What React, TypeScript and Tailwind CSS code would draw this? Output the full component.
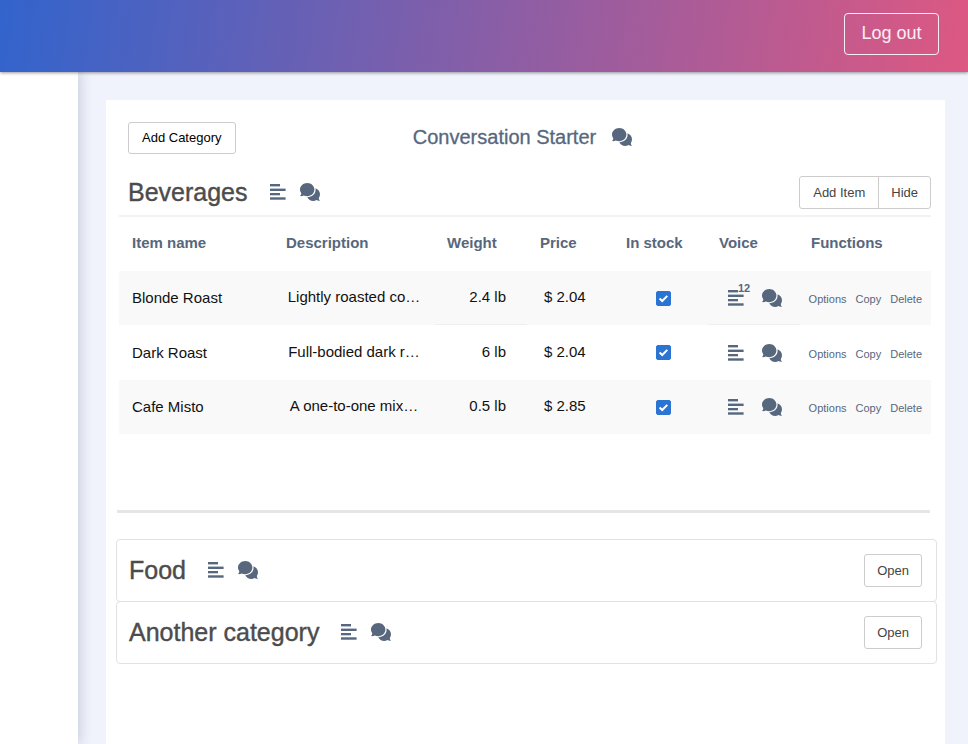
import React, { useState } from 'react';

interface Item {
  id: number;
  name: string;
  description: string;
  weight: string;
  price: string;
  inStock: boolean;
  voiceCount?: number;
}

const items: Item[] = [
  { id: 1, name: 'Blonde Roast', description: 'Lightly roasted co…', weight: '2.4 lb', price: '$ 2.04', inStock: true, voiceCount: 12 },
  { id: 2, name: 'Dark Roast', description: 'Full-bodied dark r…', weight: '6 lb', price: '$ 2.04', inStock: true },
  { id: 3, name: 'Cafe Misto', description: 'A one-to-one mix…', weight: '0.5 lb', price: '$ 2.85', inStock: true },
];

const closedCategories = ['Food', 'Another category'];

const LinesIcon: React.FC = () => (
  <svg viewBox="0 0 16 16" className="block w-4 h-4" fill="currentColor" aria-hidden="true">
    <rect x="0" y="0" width="10" height="2.4" />
    <rect x="0" y="4.6" width="15.6" height="2.4" />
    <rect x="0" y="9" width="10" height="2.3" />
    <rect x="0" y="13.3" width="15.6" height="2.4" />
  </svg>
);

const ChatIcon: React.FC = () => (
  <svg viewBox="0 0 20 18" className="block w-5 h-[18px]" fill="currentColor" aria-hidden="true">
    <path d="M7.3 0C11.3 0 14.4 2.9 14.4 6.6S11.3 13.2 7.3 13.2C6 13.2 4.8 12.9 3.8 12.4C2.7 13 1.5 13.3 0.1 13.1C0.9 12.3 1.3 11.4 1.3 10.3C0.5 9.2 0 8 0 6.6C0 2.9 3.3 0 7.3 0Z" />
    <path d="M15.4 5.2C18.1 6.2 20 8.5 20 11.2C20 12.7 19.6 13.9 18.8 14.9C18.8 16.1 19.2 17 20 17.7C18.6 17.9 17.4 17.6 16.4 17C15.5 17.6 14.4 17.9 13.2 17.9C10.6 17.9 8.4 16.6 7.3 14.2C12 14.2 15.6 11 15.6 6.8C15.6 6.2 15.5 5.7 15.4 5.2Z" />
  </svg>
);

interface IconPairProps {
  label: string;
  count?: number;
  className: string;
}

const IconPair: React.FC<IconPairProps> = ({ label, count, className }) => (
  <div className={`flex items-center text-[#57677d] ${className}`}>
    <button type="button" aria-label={`${label} phrases`} className="relative">
      <LinesIcon />
      {count !== undefined && (
        <span className="absolute left-2.5 -top-2 text-[11px] leading-3 font-bold">{count}</span>
      )}
    </button>
    <button type="button" aria-label={`${label} conversation`}>
      <ChatIcon />
    </button>
  </div>
);

const CategoryTitle: React.FC<{ name: string }> = ({ name }) => (
  <div className="flex items-center gap-[22px] pb-0.5">
    <h2 className="text-[25px] leading-8 text-[#4c4c4c] [-webkit-text-stroke:0.4px]">{name}</h2>
    <IconPair label={name} className="gap-3.5" />
  </div>
);

const StockCheckbox: React.FC<{ item: Item }> = ({ item }) => {
  const [checked, setChecked] = useState(item.inStock);

  return (
    <label className="grid w-[15px] h-[15px]">
      <input
        type="checkbox"
        checked={checked}
        onChange={(e) => setChecked(e.target.checked)}
        aria-label={`${item.name} in stock`}
        className="peer col-start-1 row-start-1 appearance-none w-[15px] h-[15px] rounded-xs border border-[#2b74d2] checked:bg-[#2b74d2]"
      />
      <svg
        viewBox="0 0 15 15"
        className="col-start-1 row-start-1 w-[15px] h-[15px] pointer-events-none invisible peer-checked:visible"
        fill="none"
        stroke="#fff"
        strokeWidth="2"
        aria-hidden="true"
      >
        <path d="M3.6 7.6L6.2 10L11.3 4.9" />
      </svg>
    </label>
  );
};

const App: React.FC = () => {
  return (
    <div className="min-h-screen flex flex-col bg-[#f0f3fc] text-[#111] font-['Liberation_Sans',Arial,sans-serif]">
      <header className="relative z-10 flex justify-end items-start h-[72px] pt-[13px] pr-[29px] bg-[linear-gradient(98deg,#3264cc,#dd5882)] shadow-[0_1px_3px_rgba(0,0,0,0.4)]">
        <button type="button" className="h-[42px] w-[95px] pb-0.5 rounded border border-white/90 text-lg leading-6 text-white/90">
          Log out
        </button>
      </header>

      <div className="flex flex-1">
        <aside className="w-[78px] shrink-0 bg-white shadow-[2px_0_12px_rgba(40,50,80,0.2)]"></aside>

        <main className="flex-1 min-w-0 mt-7 ml-7 mr-[23px] bg-white">
          <div className="grid grid-cols-[1fr_auto_1fr] items-center pt-[22px] pl-[22px] pr-7">
            <div>
              <button type="button" className="block h-8 px-[13px] rounded-[3px] border border-[#ccc] text-[13px] text-black">
                Add Category
              </button>
            </div>
            <div className="flex items-center gap-4 pb-0.5 text-[#57677d]">
              <h1 className="text-xl leading-6 [-webkit-text-stroke:0.3px]">Conversation Starter</h1>
              <button type="button" aria-label="Start conversation">
                <ChatIcon />
              </button>
            </div>
          </div>

          <section className="mt-[22px] ml-[13px] mr-3.5">
            <div className="flex items-start justify-between pl-[9px] pb-[5px] border-b-2 border-[#f2f2f2]">
              <CategoryTitle name="Beverages" />
              <div className="flex h-[33px] rounded-[3px] border border-[#ccc] text-[13px] text-[#444]">
                <button type="button" className="px-[13px]">Add Item</button>
                <button type="button" className="px-3 border-l border-[#ccc]">Hide</button>
              </div>
            </div>

            <table className="w-full table-fixed border-separate border-spacing-0 text-[15px] leading-5">
              <thead>
                <tr className="h-[54px] text-left text-[#57677d]">
                  <th className="w-[154px] pb-0.5 pl-[13px]">Item name</th>
                  <th className="w-[162px] pb-0.5 pl-[13px]">Description</th>
                  <th className="w-[92px] pb-0.5 pl-3">Weight</th>
                  <th className="w-[87px] pb-0.5 pl-[13px]">Price</th>
                  <th className="w-[94px] pb-0.5 pl-3">In stock</th>
                  <th className="w-[92px] pb-0.5 pl-[11px]">Voice</th>
                  <th className="w-[131px] pb-0.5 pl-[11px]">Functions</th>
                </tr>
              </thead>
              <tbody>
                {items.map((item) => (
                  <tr key={item.id} className="group h-[54px] even:h-[55px] odd:bg-[#f9f9f9]">
                    <td className="pl-[13px]">{item.name}</td>
                    <td className="pb-0.5 text-center truncate">{item.description}</td>
                    <td className="pb-0.5 pr-[21px] text-right border-[#efefef] group-first:border-b">{item.weight}</td>
                    <td className="pb-0.5 pl-[17px]">{item.price}</td>
                    <td className="pl-[42px]">
                      <StockCheckbox item={item} />
                    </td>
                    <td className="pl-5 border-[#efefef] group-first:border-b">
                      <IconPair label={item.name} count={item.voiceCount} className="gap-[18px]" />
                    </td>
                    <td className="pt-0.5">
                      <div className="flex justify-end gap-[9px] pr-[9px] text-[11px] leading-4 text-[#57677d]">
                        <button type="button">Options</button>
                        <button type="button">Copy</button>
                        <button type="button">Delete</button>
                      </div>
                    </td>
                  </tr>
                ))}
              </tbody>
            </table>
          </section>

          <hr className="mt-[76px] ml-[11px] mr-[15px] border-t-3 border-[#e5e6e6]" />

          <div className="mt-[26px] ml-2.5 mr-2">
            {closedCategories.map((name) => (
              <section
                key={name}
                className="-mt-px first:mt-0 flex items-center justify-between h-[63px] pl-3 pr-3.5 rounded border border-[#e2e2e2]"
              >
                <CategoryTitle name={name} />
                <button type="button" className="h-[33px] px-3 rounded-[3px] border border-[#ccc] text-[13px] text-[#444]">
                  Open
                </button>
              </section>
            ))}
          </div>
        </main>
      </div>
    </div>
  );
};

export default App;
